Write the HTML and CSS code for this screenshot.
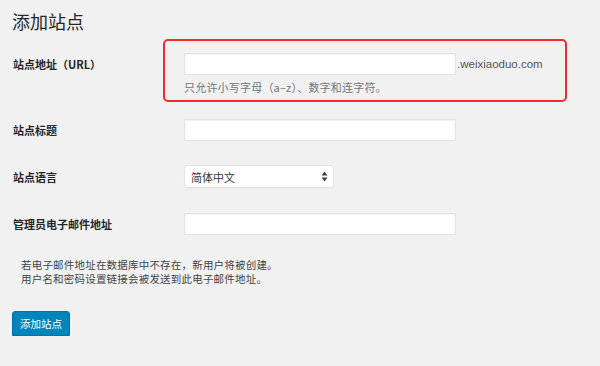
FILE: index.html
```html
<!DOCTYPE html>
<html lang="zh-CN">
<head>
    <meta charset="UTF-8">
    <title>添加站点</title>
    <link rel="stylesheet" href="styles.css">
</head>
<body>
<div class="wrap">
    <h1>添加站点</h1>

    <div class="form-table">
        <div class="row">
            <div class="label">站点地址（URL）</div>
            <div class="field marked">
                <div class="inline">
                    <div class="input"></div>
                    <span class="domain">.weixiaoduo.com</span>
                </div>
                <p class="hint">只允许小写字母（a–z）、数字和连字符。</p>
            </div>
        </div>
        <div class="row">
            <div class="label">站点标题</div>
            <div class="field"><div class="input"></div></div>
        </div>
        <div class="row">
            <div class="label">站点语言</div>
            <div class="field">
                <div class="select">
                    <span>简体中文</span>
                    <svg width="7" height="11" viewBox="0 0 7 11">
                        <path d="M3.5 0.5 L6.5 4.5 L0.5 4.5 Z" fill="#444"/>
                        <path d="M3.5 10.5 L6.5 6.5 L0.5 6.5 Z" fill="#444"/>
                    </svg>
                </div>
            </div>
        </div>
        <div class="row">
            <div class="label">管理员电子邮件地址</div>
            <div class="field"><div class="input"></div></div>
        </div>
    </div>

    <div class="note">
        <p>若电子邮件地址在数据库中不存在，新用户将被创建。</p>
        <p>用户名和密码设置链接会被发送到此电子邮件地址。</p>
    </div>

    <button class="button">添加站点</button>
</div>
</body>
</html>
```

FILE: styles.css
```css
body {
    margin: 0;
    background: #f1f1f1;
    color: #23282d;
    font-family: "Noto Sans CJK SC", "Noto Sans", sans-serif;
}

.wrap {
    padding: 0 12px;
}

h1 {
    margin: 9px 0 0;
    font-size: 18px;
    font-weight: 400;
    line-height: 24px;
    color: #23282d;
}

.form-table {
    margin-top: 20px;
    display: flex;
    flex-direction: column;
    gap: 25px;
}

.row {
    display: flex;
    align-items: flex-start;
}

.label {
    width: 172px;
    flex: none;
    font-size: 11px;
    font-weight: 700;
    line-height: 22px;
    padding-left: 1px;
    box-sizing: border-box;
}

.field {
    position: relative;
}

/* red annotation round the url field */
.marked::after {
    content: "";
    position: absolute;
    left: -21px;
    top: -14px;
    width: 400px;
    height: 59px;
    border: 2px solid #ef2b2b;
    border-radius: 5px;
}

.inline {
    display: flex;
    align-items: center;
}

.input {
    width: 272px;
    height: 22px;
    box-sizing: border-box;
    background: #fff;
    border: 1px solid #e2e2e2;
    box-shadow: inset 0 1px 2px rgba(0, 0, 0, 0.06);
}

.domain {
    margin-left: 1px;
    font-family: "Liberation Sans", Arial, sans-serif;
    font-size: 11.5px;
    color: #555;
}

.hint {
    margin: 5px 0 0;
    font-size: 11px;
    line-height: 14px;
    color: #72777c;
    letter-spacing: 0.2px;
}

.select {
    width: 148px;
    height: 21px;
    margin-left: 1px;
    box-sizing: border-box;
    padding: 0 5px 0 6px;
    display: flex;
    align-items: center;
    justify-content: space-between;
    background: #fff;
    border-radius: 3px;
    box-shadow: 0 0 0 1px #e4e4e4, 0 1px 2px rgba(0, 0, 0, 0.08);
    font-size: 11px;
    color: #32373c;
}

.note {
    margin: 23px 0 0 9px;
    font-size: 10.5px;
    color: #444;
}

.note p {
    margin: 0;
    height: 14px;
    line-height: 14px;
    letter-spacing: 0.2px;
    white-space: nowrap;
}

.button {
    margin-top: 25px;
    height: 25px;
    padding: 0 7px;
    background: #0085ba;
    border: 1px solid #0073aa;
    border-radius: 3px;
    box-shadow: 0 1px 0 #006799;
    color: #fff;
    font-family: "Noto Sans CJK SC", sans-serif;
    font-size: 10.5px;
    line-height: 21px;
    cursor: pointer;
}
```
